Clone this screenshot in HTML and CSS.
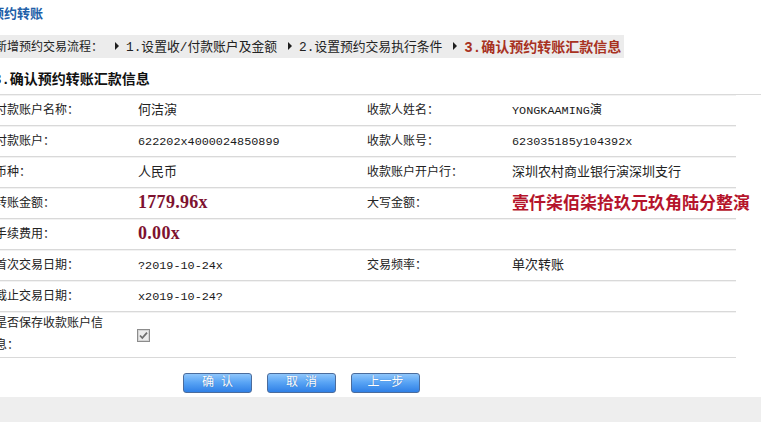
FILE: index.html
```html
<!DOCTYPE html>
<html lang="zh-CN">
<head>
<meta charset="utf-8">
<title>预约转账</title>
<link rel="stylesheet" href="styles.css">
</head>
<body>
<div class="page">
  <h1 class="title">预约转账</h1>
  <div class="crumbs">
    <span class="prefix">新增预约交易流程：</span>
    <span class="arrow"></span><span class="step">1.设置收/付款账户及金额</span>
    <span class="arrow"></span><span class="step">2.设置预约交易执行条件</span>
    <span class="arrow"></span><span class="step current">3.确认预约转账汇款信息</span>
  </div>
  <h2 class="section">3.确认预约转账汇款信息</h2>
  <div class="info">
    <div class="row">
      <div class="label">付款账户名称：</div><div class="value cn">何洁演</div>
      <div class="label">收款人姓名：</div><div class="value"><span class="mono">YONGKAAMING</span>演</div>
    </div>
    <div class="row">
      <div class="label">付款账户：</div><div class="value"><span class="mono">622202x4000024850899</span></div>
      <div class="label">收款人账号：</div><div class="value"><span class="mono">623035185y104392x</span></div>
    </div>
    <div class="row">
      <div class="label">币种：</div><div class="value cn">人民币</div>
      <div class="label">收款账户开户行：</div><div class="value cn">深圳农村商业银行演深圳支行</div>
    </div>
    <div class="row">
      <div class="label">转账金额：</div><div class="value"><span class="amount">1779.96x</span></div>
      <div class="label">大写金额：</div><div class="value"><span class="capital">壹仟柒佰柒拾玖元玖角陆分整演</span></div>
    </div>
    <div class="row">
      <div class="label">手续费用：</div><div class="value"><span class="amount">0.00x</span></div>
      <div class="label"></div><div class="value"></div>
    </div>
    <div class="row">
      <div class="label">首次交易日期：</div><div class="value"><span class="mono">?2019-10-24x</span></div>
      <div class="label">交易频率：</div><div class="value cn">单次转账</div>
    </div>
    <div class="row">
      <div class="label">截止交易日期：</div><div class="value"><span class="mono">x2019-10-24?</span></div>
      <div class="label"></div><div class="value"></div>
    </div>
    <div class="row tall">
      <div class="label wrap">是否保存收款账户信息：</div>
      <div class="value">
        <svg class="check" width="13" height="13" viewBox="0 0 13 13" aria-label="已勾选">
          <rect x="0.5" y="0.5" width="12" height="12" fill="#ececec" stroke="#8c8c8c"/>
          <rect x="1.5" y="1.5" width="10" height="10" fill="none" stroke="#d4d4d4"/>
          <path d="M3 6.5 L5.3 9 L10 3.6" fill="none" stroke="#6e6e6e" stroke-width="1.8"/>
        </svg>
      </div>
      <div class="label"></div><div class="value"></div>
    </div>
  </div>
  <div class="actions">
    <button class="btn" type="button">确 认</button>
    <button class="btn" type="button">取 消</button>
    <button class="btn" type="button">上一步</button>
  </div>
</div>
<div class="footer"></div>
</body>
</html>
```

FILE: styles.css
```css
html, body {
  margin: 0;
  padding: 0;
  background: #ffffff;
  overflow: hidden;
}

body {
  font-family: "Liberation Mono", "Noto Sans CJK SC", monospace;
  font-size: 12px;
  color: #222222;
}

.page {
  margin-left: -5px;
}

.title {
  margin: 0 0 0 -4px;
  height: 35px;
  box-sizing: border-box;
  padding-top: 5px;
  font-size: 13px;
  line-height: 20px;
  font-weight: bold;
  color: #2160a8;
}

.crumbs {
  display: flex;
  align-items: center;
  width: max-content;
  height: 23px;
  box-sizing: border-box;
  padding: 0 3px 2px 0;
  background: #ececec;
  color: #222222;
  white-space: nowrap;
}

.prefix {
  font-size: 12px;
  margin-right: 1px;
}

.step {
  font-size: 12.8px;
}

.step.current {
  font-size: 14px;
  font-weight: bold;
  color: #a8321f;
}

.arrow {
  width: 0;
  height: 0;
  margin: 0 7px 0 11px;
  border-left: 4px solid #1e1e1e;
  border-top: 4px solid transparent;
  border-bottom: 4px solid transparent;
}

.section {
  margin: 0 0 0 -2px;
  padding: 10px 0 2px 0;
  font-size: 14px;
  line-height: 24px;
  font-weight: bold;
  color: #111111;
  border-bottom: 1px solid #dadada;
}

.info {
  width: 741px;
}

.row {
  display: grid;
  grid-template-columns: 143px 229px 145px 224px;
  align-items: center;
  height: 31px;
  box-sizing: border-box;
  border-top: 1px solid #f2f2f2;
  border-bottom: 1px solid #d9d9d9;
}

.row.tall {
  height: 46px;
}

.label {
  font-size: 12px;
  line-height: 22px;
  padding-right: 27px;
  color: #222222;
}

.value {
  font-size: 12px;
  line-height: 22px;
  color: #222222;
  white-space: nowrap;
}

.value.cn {
  font-size: 13px;
}

.value .mono {
  font-size: 11.8px;
  color: #1a1a1a;
}

.amount {
  font-family: "Liberation Serif", "Noto Sans CJK SC", serif;
  font-size: 18px;
  font-weight: bold;
  color: #7e1230;
  letter-spacing: 0.3px;
}

.capital {
  font-family: "Noto Sans CJK SC", sans-serif;
  font-size: 17px;
  font-weight: bold;
  color: #b5142b;
  line-height: 22px;
  white-space: nowrap;
}

.check {
  display: block;
  margin-left: -1px;
}

.actions {
  display: flex;
  gap: 15px;
  height: 39px;
  box-sizing: border-box;
  padding: 15px 0 4px 188px;
}

.btn {
  width: 69px;
  height: 20px;
  padding: 0;
  border: 1px solid #4b6c9c;
  border-radius: 3px;
  background: linear-gradient(to bottom, #8fc6fb 0%, #5aa5f5 45%, #2f80e6 100%);
  color: #ffffff;
  font-family: "Liberation Mono", "Noto Sans CJK SC", monospace;
  font-size: 12px;
  line-height: 18px;
  text-shadow: 0 0 1px rgba(20, 60, 120, 0.5);
  cursor: pointer;
}

.footer {
  height: 40px;
  background: #eeeeee;
}
```
